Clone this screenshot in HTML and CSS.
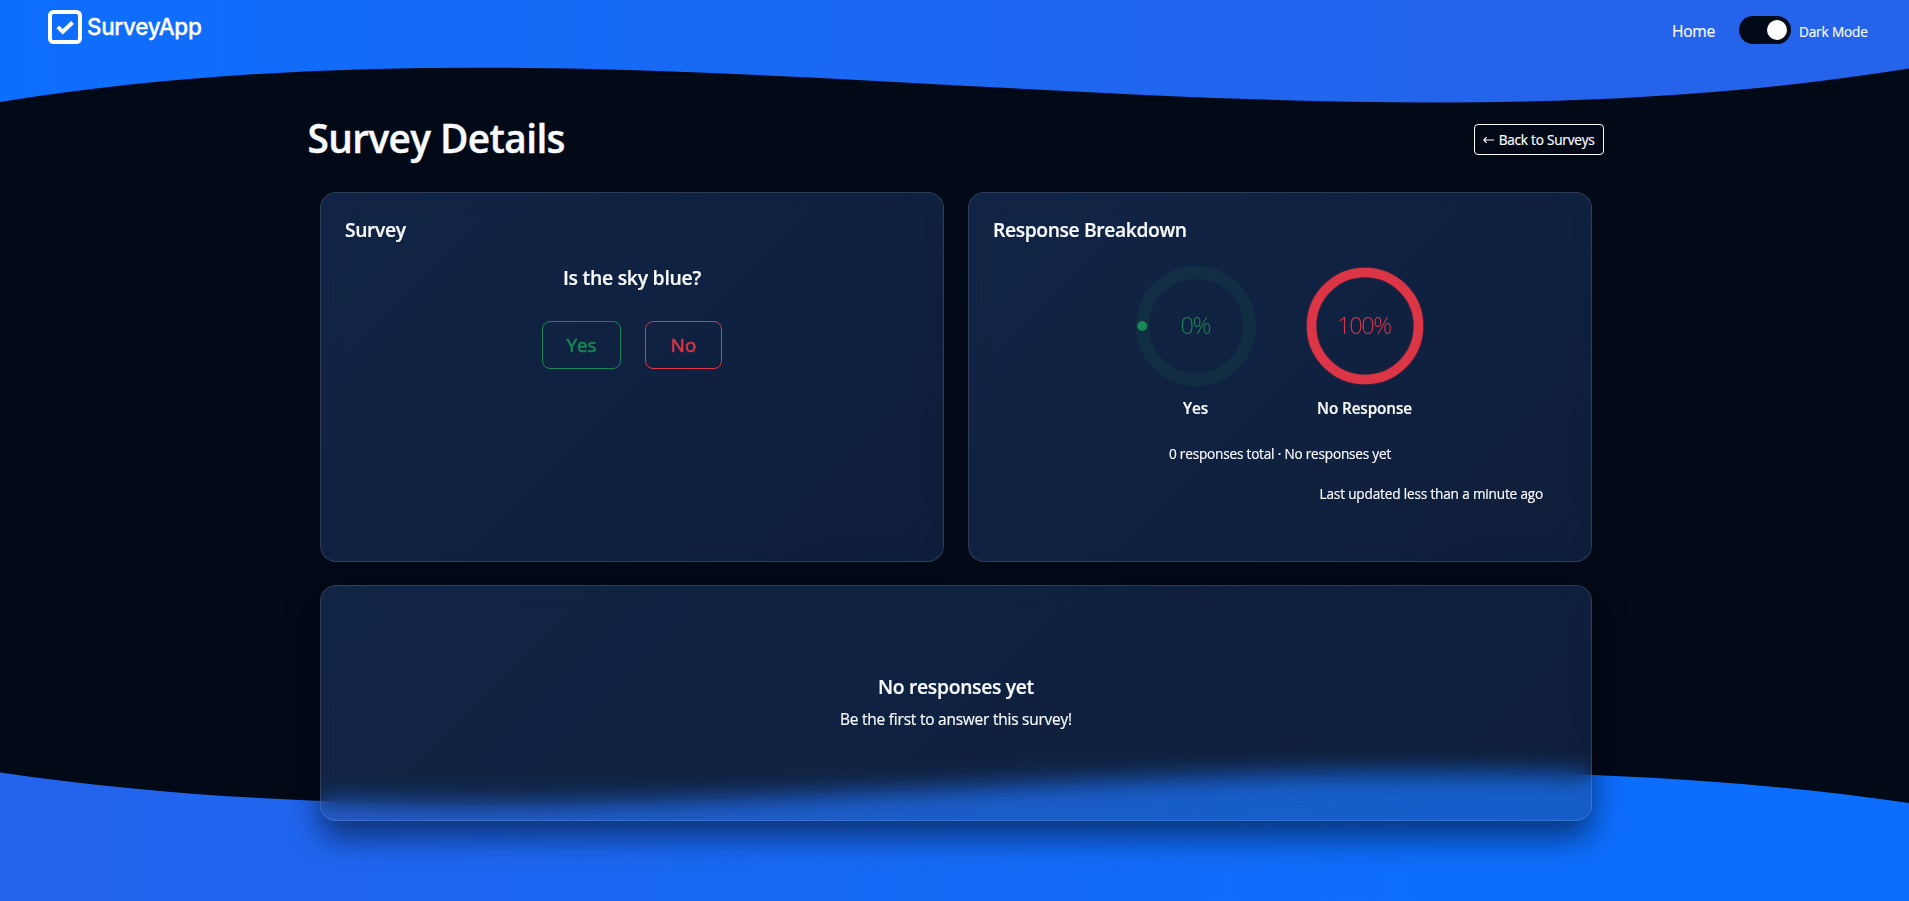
FILE: index.html
```html
<!DOCTYPE html>
<html lang="en">
<head>
<meta charset="utf-8">
<title>SurveyApp</title>
<link rel="stylesheet" href="styles.css">
</head>
<body>
<svg class="wave wave-top" viewBox="0 0 1440 170" preserveAspectRatio="none">
  <defs><linearGradient id="gt" x1="0" x2="1" y1="0" y2="0"><stop offset="0" stop-color="#0d6efd"/><stop offset="0.8" stop-color="#2563eb"/></linearGradient></defs>
  <path fill="url(#gt)" d="M0 0V102C480 -1 960 171 1440 68.5V0Z"/>
</svg>
<svg class="wave wave-bottom" viewBox="0 0 1440 170" preserveAspectRatio="none">
  <defs><linearGradient id="gb" x1="0" x2="1" y1="0" y2="0"><stop offset="0" stop-color="#2563eb"/><stop offset="0.75" stop-color="#0d6efd"/></linearGradient></defs>
  <path fill="url(#gb)" d="M0 170V41.5C480 135 960 -21 1440 72V170Z"/>
</svg>
<header class="navbar">
  <a class="brand">
    <svg class="brand-icon" viewBox="0 0 34 34" fill="none" stroke="#fff"><rect x="2" y="2" width="30" height="30" rx="3.5" stroke-width="4"/><path d="M9.8 16.8l5 5 9.7-9.3" stroke-width="4"/></svg>
    <span class="brand-name">SurveyApp</span>
  </a>
  <nav class="nav">
    <a class="nav-link">Home</a>
    <span class="toggle"><span class="knob"></span></span>
    <span class="toggle-label">Dark Mode</span>
  </nav>
</header>
<main class="page">
  <div class="page-head">
    <h1 class="title">Survey Details</h1>
    <a class="back"><svg class="arrow" viewBox="0 0 11 8" fill="none" stroke="#fff" stroke-width="1.2"><path d="M11 4H1M3.6 1.2L.8 4l2.8 2.8"/></svg><span>Back to Surveys</span></a>
  </div>
  <div class="grid">
    <section class="card">
      <h2 class="card-title">Survey</h2>
      <p class="question">Is the sky blue?</p>
      <div class="answers">
        <button class="btn btn-yes">Yes</button>
        <button class="btn btn-no">No</button>
      </div>
    </section>
    <section class="card">
      <h2 class="card-title">Response Breakdown</h2>
      <div class="rings">
        <figure class="ring">
          <svg class="ring-svg" viewBox="0 0 120 120" fill="none"><circle cx="60" cy="60" r="53.5" stroke="#198754" stroke-opacity=".12" stroke-width="13"/><circle cx="6.2" cy="60" r="5" fill="#198754"/><text class="ring-text" x="59.4" y="68" fill="#198754">0%</text></svg>
          <figcaption class="ring-label">Yes</figcaption>
        </figure>
        <figure class="ring">
          <svg class="ring-svg" viewBox="0 0 120 120" fill="none"><circle cx="60" cy="60" r="53.5" stroke="#dc3545" stroke-opacity=".12" stroke-width="12"/><circle cx="60" cy="60" r="53.5" stroke="#dc3545" stroke-width="9.6"/><text class="ring-text" x="59" y="68" fill="#dc3545">100%</text></svg>
          <figcaption class="ring-label">No Response</figcaption>
        </figure>
      </div>
      <p class="total">0 responses total · No responses yet</p>
      <p class="updated">Last updated less than a minute ago</p>
    </section>
    <section class="card card-empty">
      <h2 class="empty-title">No responses yet</h2>
      <p class="empty-text">Be the first to answer this survey!</p>
    </section>
  </div>
</main>
</body>
</html>
```

FILE: styles.css
```css
* { box-sizing: border-box; }
html, body { height: 100%; }
body {
  margin: 0;
  overflow: hidden;
  background: #020917;
  color: #f8fafc;
  font-family: "Open Sans", "Noto Sans", sans-serif;
  font-size: 15px;
  -webkit-text-stroke: .2px currentColor;
}
h1, h2, p, figure { margin: 0; }
.wave { position: absolute; left: 0; width: 100%; height: 170px; display: block; }
.wave-top { top: 0; }
.wave-bottom { bottom: 0; }
.navbar {
  position: relative;
  height: 60px;
  padding: 0 41px 0 48px;
  display: flex;
  justify-content: space-between;
  align-items: flex-start;
}
.brand { display: flex; align-items: center; gap: 5px; padding-top: 10px; }
.brand-icon { width: 34px; height: 34px; }
.brand-name { font: 500 22.5px/34px Inter, sans-serif; letter-spacing: -.35px; color: #fff; -webkit-text-stroke: .3px #fff; }
.nav { display: flex; align-items: center; height: 60px; }
.nav-link { font-size: 15.6px; letter-spacing: -.25px; margin-right: 24px; padding-top: 1px; }
.toggle {
  width: 52px; height: 28px; border-radius: 14px; background: #020917;
  display: flex; justify-content: flex-end; align-items: center; padding-right: 4px; margin-right: 8px;
}
.knob { width: 20px; height: 20px; border-radius: 50%; background: #fff; }
.toggle-label { width: 69px; font-size: 13.6px; letter-spacing: -.15px; padding-top: 2px; white-space: nowrap; }
.page { position: relative; width: 1296px; margin: 0 auto; left: 1px; padding-top: 48px; }
.page-head { display: flex; justify-content: space-between; align-items: center; height: 60px; }
.title { font-size: 38.8px; font-weight: 600; line-height: 60px; letter-spacing: -.6px; -webkit-text-stroke: .4px currentColor; }
.back {
  display: flex; align-items: center; justify-content: space-between; width: 130px; height: 31px; padding: 0 8px;
  border: 1px solid #fff; border-radius: 4px; font-size: 13.6px; letter-spacing: -.22px; color: #fff; margin-top: 3px;
  white-space: nowrap;
}
.arrow { width: 11px; height: 8px; }
.grid { display: grid; grid-template-columns: 624px 624px; grid-template-rows: 370px 236px; gap: 23px 24px; justify-content: center; margin-top: 24px; margin-left: 1px; }
.card {
  border: 1px solid rgba(255, 255, 255, .13);
  border-radius: 16px;
  padding: 24px;
  background: linear-gradient(135deg, rgba(41, 82, 146, .383), rgba(35, 66, 116, .383));
  backdrop-filter: blur(12px);
  display: flex;
  flex-direction: column;
}
.card-title { font-size: 19.3px; letter-spacing: -.38px; font-weight: 600; line-height: 26px; }
.question { text-align: center; font-size: 19.4px; letter-spacing: -.26px; font-weight: 600; line-height: 26px; margin-top: 22px; }
.answers { display: flex; justify-content: center; gap: 24px; margin-top: 30px; }
.btn {
  height: 48px; padding: 1px 0 0; border: 1px solid; border-radius: 8px;
  background: none; font: 500 18.8px/45px "Open Sans", sans-serif; -webkit-text-stroke: .6px currentColor;
}
.btn-yes { color: #198754; width: 79px; }
.btn-no { color: #dc3545; width: 77px; }
.rings { display: flex; justify-content: center; gap: 48px; margin-top: 23px; }
.ring { width: 121px; display: flex; flex-direction: column; align-items: center; }
.ring-svg { width: 120px; height: 120px; overflow: visible; }
.ring-text { font-size: 23.5px; font-weight: 300; text-anchor: middle; letter-spacing: -1.4px; -webkit-text-stroke: 0; }
.ring-label { font-size: 15.3px; letter-spacing: -.12px; font-weight: 600; line-height: 24px; margin-top: 10px; white-space: nowrap; }
.total { text-align: center; font-size: 13.6px; letter-spacing: -.2px; line-height: 21px; margin-top: 23px; }
.updated { text-align: right; font-size: 13.6px; letter-spacing: -.17px; line-height: 21px; margin-top: 19px; padding-right: 24px; }
.card-empty {
  grid-column: 1 / 3;
  align-items: center;
  justify-content: center;
  box-shadow: 0 16px 32px rgba(0, 0, 0, .52);
}
.empty-title { font-size: 19.3px; letter-spacing: -.3px; font-weight: 600; line-height: 26px; }
.empty-text { font-size: 15.4px; letter-spacing: -.19px; line-height: 24px; margin-top: 8px; }
```
